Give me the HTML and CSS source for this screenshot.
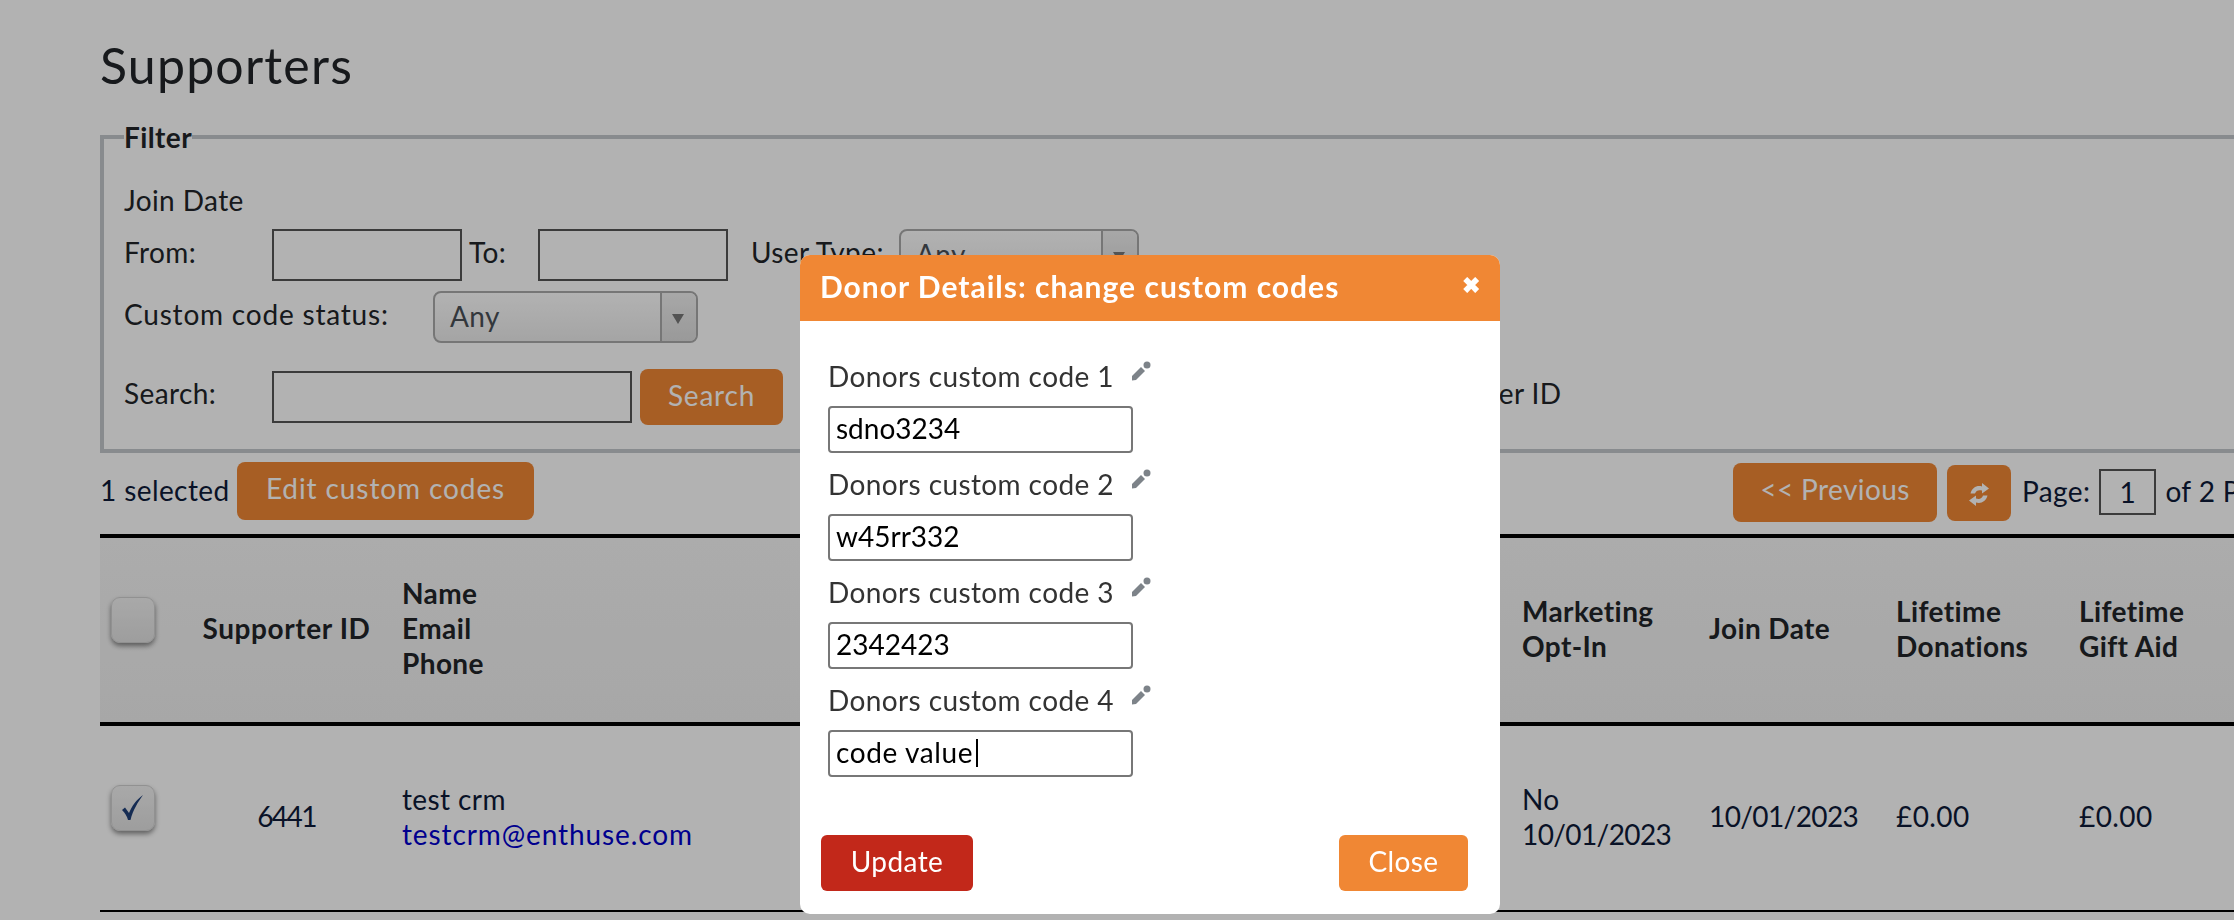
FILE: index.html
```html
<!DOCTYPE html>
<html>

<head>
    <title>Supporters</title>
    <meta name="viewport" content="width=device-width, initial-scale=1.0">
    <link rel="stylesheet" href="styles.css">
</head>

<body>
    <main class="page">
        <h1>Supporters</h1>

        <fieldset class="filter">
            <legend>Filter</legend>
            <div class="filter-title">Join Date</div>
            <div class="filter-row">
                <label class="filter-label">From:</label>
                <input class="text-input date-input" type="text">
                <label class="to-label">To:</label>
                <input class="text-input date-input" type="text">
                <label class="type-label">User Type:</label>
                <div class="select-box type-select">
                    <span>Any</span>
                    <span class="select-arrow"></span>
                </div>
            </div>
            <div class="filter-row status-row">
                <label class="status-label">Custom code status:</label>
                <div class="select-box status-select">
                    <span>Any</span>
                    <span class="select-arrow"></span>
                </div>
            </div>
            <div class="filter-row search-row">
                <label class="filter-label">Search:</label>
                <input class="text-input search-input" type="text">
                <button class="btn search-btn">Search</button>
                <span class="search-by">Supporter ID</span>
            </div>
        </fieldset>

        <div class="toolbar">
            <span class="selected-count">1 selected</span>
            <button class="btn edit-btn">Edit custom codes</button>
            <div class="pager">
                <button class="btn prev-btn">&lt;&lt; Previous</button>
                <button class="btn refresh-btn" aria-label="Refresh">
                    <svg width="20" height="25" viewBox="0 0 20 25" fill="currentColor">
                        <path d="M1.500 11.500C3 5.500 8 3 13 4.500V1L20 6.500 13 11.500V8.500C9.500 7.500 7 8.500 6 11.500Z" />
                        <path d="M18.500 13.500C17 19.500 12 22 7 20.500V24L0 18.500 7 13.500V16.500C10.500 17.500 13 16.500 14 13.500Z" />
                    </svg>
                </button>
                <span class="page-label">Page:</span>
                <input class="text-input page-input" type="text" value="1">
                <span class="page-label">of 2 Pages</span>
            </div>
        </div>

        <table class="supporters">
            <thead>
                <tr>
                    <th class="col-check"><span class="check-box"></span></th>
                    <th class="col-id">Supporter ID</th>
                    <th class="col-name">Name<br>Email<br>Phone</th>
                    <th class="col-opt">Marketing<br>Opt-In</th>
                    <th class="col-date">Join Date</th>
                    <th class="col-money">Lifetime<br>Donations</th>
                    <th class="col-last">Lifetime<br>Gift Aid</th>
                </tr>
            </thead>
            <tbody>
                <tr>
                    <td class="col-check">
                        <span class="check-box">
                            <svg width="24" height="26" viewBox="0 0 24 26" fill="#1f3f78">
                                <path d="M1 15L4 12.500 8 18C11 11 15 5 22 0 17 7 12 15 9.500 25H7C6 21 4 18 1 15Z" />
                            </svg>
                        </span>
                    </td>
                    <td class="col-id figures">6441</td>
                    <td class="col-name">test crm<br><a href="#">testcrm@enthuse.com</a></td>
                    <td class="col-opt">No<br><span class="figures">10/01/2023</span></td>
                    <td class="col-date figures">10/01/2023</td>
                    <td class="col-money">£0.00</td>
                    <td class="col-last">£0.00</td>
                </tr>
            </tbody>
        </table>
    </main>

    <div class="overlay"></div>

    <div class="modal">
        <div class="modal-header">
            <span class="modal-title">Donor Details: change custom codes</span>
            <span class="modal-close">&#10006;</span>
        </div>
        <div class="modal-body">
            <div class="field">
                <label class="field-label">Donors custom code 1
                    <svg class="pencil" width="20" height="20" viewBox="0 0 20 20" fill="#7d8389">
                        <path d="M1 15L10 6 14 10 5 19 1 19.500Z" />
                        <circle cx="16" cy="4" r="3.500" />
                    </svg>
                </label>
                <input class="code-input" type="text" value="sdno3234">
            </div>
            <div class="field">
                <label class="field-label">Donors custom code 2
                    <svg class="pencil" width="20" height="20" viewBox="0 0 20 20" fill="#7d8389">
                        <path d="M1 15L10 6 14 10 5 19 1 19.500Z" />
                        <circle cx="16" cy="4" r="3.500" />
                    </svg>
                </label>
                <input class="code-input" type="text" value="w45rr332">
            </div>
            <div class="field">
                <label class="field-label">Donors custom code 3
                    <svg class="pencil" width="20" height="20" viewBox="0 0 20 20" fill="#7d8389">
                        <path d="M1 15L10 6 14 10 5 19 1 19.500Z" />
                        <circle cx="16" cy="4" r="3.500" />
                    </svg>
                </label>
                <input class="code-input" type="text" value="2342423">
            </div>
            <div class="field">
                <label class="field-label">Donors custom code 4
                    <svg class="pencil" width="20" height="20" viewBox="0 0 20 20" fill="#7d8389">
                        <path d="M1 15L10 6 14 10 5 19 1 19.500Z" />
                        <circle cx="16" cy="4" r="3.500" />
                    </svg>
                </label>
                <div class="input-wrap">
                    <input class="code-input active-input" type="text" value="code value">
                    <span class="caret"></span>
                </div>
            </div>
        </div>
        <div class="modal-footer">
            <button class="btn update-btn">Update</button>
            <button class="btn close-btn">Close</button>
        </div>
    </div>
</body>

</html>
```

FILE: styles.css
```css
* {
    box-sizing: border-box;
    padding: 0;
    margin: 0;
}

html,
body {
    height: 920px;
    overflow: hidden;
}

body {
    background-color: #fff;
    color: #212529;
    font-family: "Lato", "Open Sans", sans-serif;
    font-size: 28px;
    letter-spacing: 0.4px;
    line-height: 35px;
}

.page {
    width: 2500px;
    padding-left: 100px;
}

h1 {
    font-size: 50px;
    font-weight: 400;
    letter-spacing: 1.2px;
    line-height: 56px;
    padding-top: 37px;
    height: 122px;
}

.figures {
    letter-spacing: -0.6px;
}

/* filter box */

.filter {
    width: 2300px;
    border: 4px solid #c3c8cc;
    padding: 0 20px 24px;
}

.filter legend {
    font-weight: 700;
    line-height: 30px;
}

.filter-title {
    margin-top: 31px;
    margin-bottom: 11px;
}

.filter-row {
    display: flex;
    align-items: flex-start;
}

.filter-label {
    width: 148px;
    line-height: 46px;
}

.to-label {
    line-height: 46px;
    margin-left: 7px;
    width: 69px;
}

.type-label {
    line-height: 46px;
    margin-left: 23px;
    width: 148px;
}

.status-row {
    margin-top: 10px;
}

.status-label {
    line-height: 46px;
    width: 309px;
    letter-spacing: 0.8px;
}

.search-row {
    margin-top: 26px;
}

.search-row .filter-label {
    margin-top: 1px;
}

.text-input {
    border: 2px solid #555;
    background-color: #fff;
    font: inherit;
    letter-spacing: inherit;
    color: #0e1a38;
}

.date-input {
    width: 190px;
    height: 52px;
}

.search-input {
    width: 360px;
    height: 52px;
    margin-top: 2px;
}

.select-box {
    display: flex;
    justify-content: space-between;
    height: 52px;
    border: 2px solid #aaa;
    border-radius: 8px;
    background: linear-gradient(#fff, #ececec);
    color: #495057;
    padding-left: 15px;
    line-height: 46px;
}

.type-select {
    width: 240px;
}

.status-select {
    width: 265px;
}

.select-arrow {
    position: relative;
    width: 36px;
    border-left: 2px solid #aaa;
    background: linear-gradient(#f0f0f0, #dcdcdc);
    border-radius: 0 6px 6px 0;
}

.select-arrow::after {
    content: "";
    position: absolute;
    left: 10px;
    top: 21px;
    border-left: 6px solid transparent;
    border-right: 6px solid transparent;
    border-top: 10px solid #777;
}

.btn {
    border: 0;
    border-radius: 8px;
    background-color: #f08734;
    color: #fff;
    font: inherit;
    letter-spacing: inherit;
}

.search-btn {
    width: 143px;
    height: 56px;
    margin-left: 8px;
    padding-bottom: 4px;
    letter-spacing: 0.8px;
}

.search-by {
    line-height: 46px;
    margin-left: 615px;
    margin-top: 1px;
}

/* toolbar above the table */

.toolbar {
    display: flex;
    align-items: flex-start;
    padding-top: 9px;
    height: 81px;
    color: #0e1a38;
}

.selected-count {
    line-height: 56px;
    width: 137px;
}

.edit-btn {
    width: 297px;
    height: 58px;
    padding-bottom: 6px;
    letter-spacing: 0.9px;
}

.pager {
    display: flex;
    align-items: flex-start;
    margin-left: 1199px;
}

.prev-btn {
    width: 204px;
    height: 59px;
    margin-top: 1px;
    padding-bottom: 6px;
}

.refresh-btn {
    display: flex;
    align-items: center;
    justify-content: center;
    width: 64px;
    height: 56px;
    margin-top: 3px;
    margin-left: 10px;
    padding-top: 2px;
}

.page-label {
    line-height: 58px;
    margin-left: 11px;
}

.page-input {
    width: 57px;
    height: 46px;
    margin-top: 7px;
    margin-left: 9px;
    text-align: center;
    margin-right: -2px;
}

/* table */

.supporters {
    width: 2234px;
    table-layout: fixed;
    border-collapse: collapse;
    color: #0e1a38;
}

.supporters th {
    height: 188px;
    border-top: 4px solid #000;
    border-bottom: 4px solid #000;
    background: linear-gradient(#f6f6f6, #f0f0f0);
    color: #212529;
    font-weight: 700;
    text-align: left;
    padding: 0 11px 3px;
}

.supporters th.col-id {
    letter-spacing: 0.6px;
    white-space: nowrap;
    padding-left: 0;
    padding-right: 0;
}

.supporters td {
    height: 187px;
    border-bottom: 2px solid #000;
    padding: 0 11px 3px;
}

.supporters td.col-id {
    letter-spacing: -1.6px;
}

.col-check {
    width: 92px;
}

.supporters .col-check {
    padding-left: 11px;
    padding-bottom: 0;
}

.col-id {
    width: 189px;
}

.supporters .col-id {
    text-align: center;
}

.col-name {
    width: 1130px;
}

.supporters .col-name {
    padding-left: 21px;
}

.col-opt {
    width: 187px;
}

.col-date {
    width: 187px;
}

.col-money {
    width: 183px;
}

.check-box {
    display: flex;
    align-items: center;
    justify-content: center;
    width: 44px;
    height: 46px;
    margin-bottom: 20px;
    border-radius: 9px;
    background: linear-gradient(#f2f2f2, #e2e2e2);
    border: 1px solid #d0d0d0;
    box-shadow: 0 3px 5px rgba(0, 0, 0, 0.45);
}

a {
    color: #0000cc;
    text-decoration: none;
    letter-spacing: 0.9px;
}

/* modal */

.overlay {
    position: fixed;
    top: 0;
    left: 0;
    width: 100%;
    height: 100%;
    background-color: rgba(0, 0, 0, 0.3);
}

.modal {
    position: fixed;
    top: 255px;
    left: 800px;
    width: 700px;
    height: 659px;
    border-radius: 10px;
    overflow: hidden;
    background-color: #fff;
}

.modal-header {
    display: flex;
    justify-content: space-between;
    align-items: center;
    height: 66px;
    padding: 0 20px;
    background-color: #f08734;
    color: #fff;
}

.modal-title {
    font-size: 30px;
    font-weight: 700;
    letter-spacing: 1px;
    margin-top: -4px;
}

.modal-close {
    font-size: 22px;
    font-weight: 700;
    margin-top: -8px;
}

.modal-body {
    padding: 38px 0 0 28px;
}

.field {
    margin-bottom: 14px;
}

.field-label {
    display: flex;
    height: 35px;
    margin-bottom: 12px;
    color: #333;
}

.pencil {
    margin-left: 17px;
    margin-top: 2px;
    filter: blur(0.5px);
}

.code-input {
    display: block;
    width: 305px;
    height: 47px;
    border: 2px solid #777;
    border-radius: 4px;
    padding: 0 0 3px 6px;
    font: inherit;
    letter-spacing: 0;
    color: #000;
}

.active-input {
    letter-spacing: 0.6px;
}

.input-wrap {
    position: relative;
}

.caret {
    position: absolute;
    left: 148px;
    top: 9px;
    width: 2px;
    height: 28px;
    background-color: #000;
}

.modal-footer {
    display: flex;
    justify-content: space-between;
    padding: 44px 32px 0 21px;
}

.update-btn {
    width: 152px;
    height: 56px;
    border-radius: 6px;
    background-color: #c2281a;
    padding-bottom: 4px;
}

.close-btn {
    width: 129px;
    height: 56px;
    border-radius: 6px;
    padding-bottom: 4px;
}
```
